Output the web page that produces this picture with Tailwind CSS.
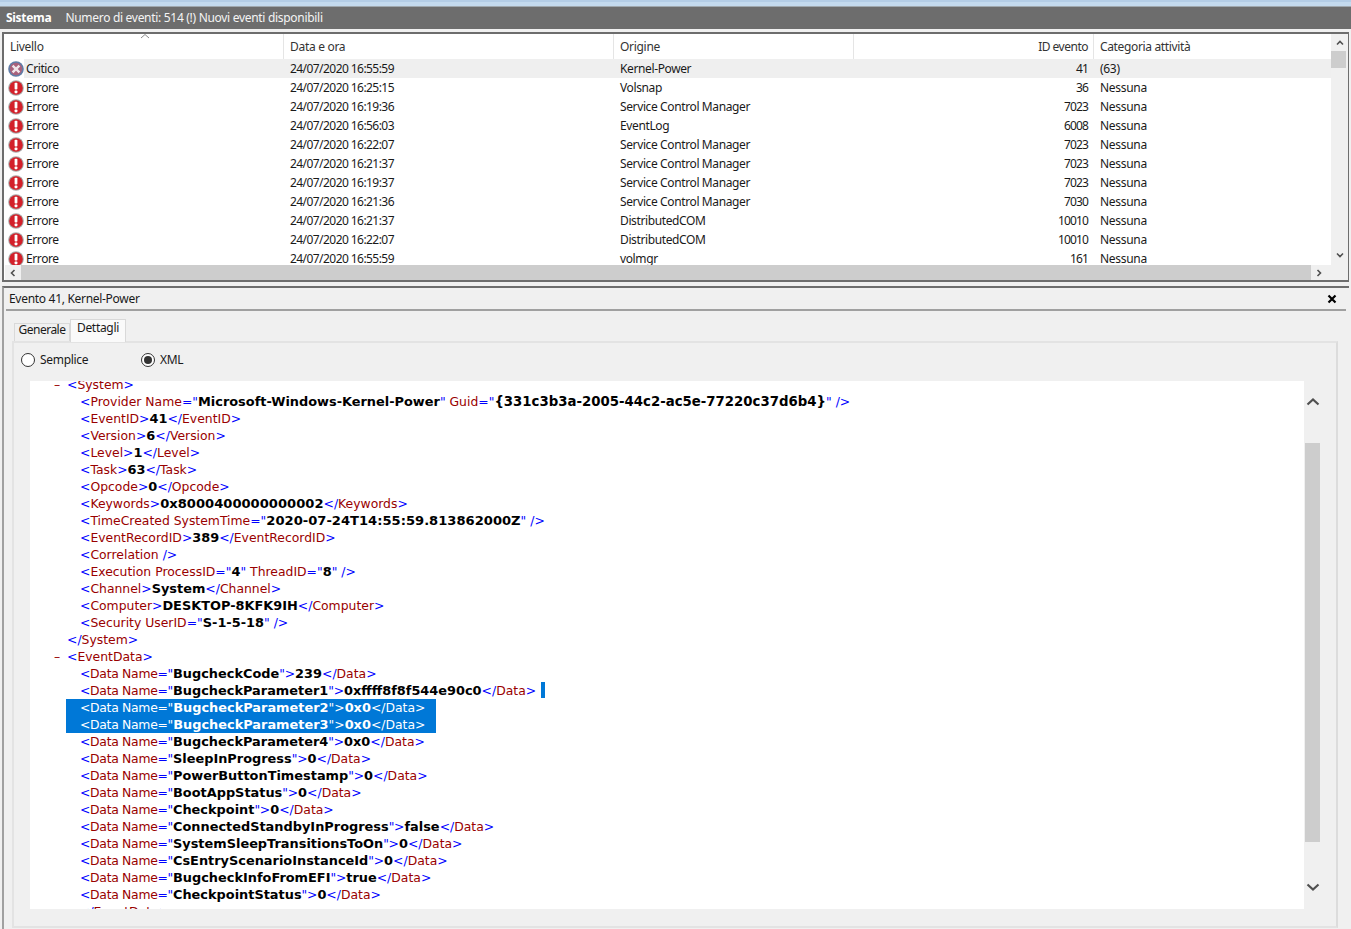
<!doctype html>
<html>
<head>
<meta charset="UTF-8">
<title>Visualizzatore eventi</title>
<script src="https://cdn.jsdelivr.net/npm/@tailwindcss/browser@4"></script>
</head>
<body>
<div class="w-[1351px] h-[929px] overflow-hidden bg-[#f0f0f0] font-['Noto_Sans',sans-serif] text-[12px] tracking-[-0.3px] text-[#1a1a1a]">
  <div class="h-[2px] bg-[#b4cde6]"></div>
  <div class="h-[4px] bg-[#c4daee]"></div>
  <div class="h-[1px] bg-[#a0a8ae]"></div>
  <!-- title bar -->
  <div class="h-[22px] bg-[#6d6d6d] text-white flex items-center px-[6px] gap-[14px]">
    <span class="font-bold">Sistema</span>
    <span class="text-[#f4f4f4]">Numero di eventi: 514 (!) Nuovi eventi disponibili</span>
  </div>
  <div class="h-[3px] bg-[#f0f0f0]"></div>

  <!-- event list -->
  <div class="relative mx-[2px] w-[1347px] h-[250px] border-2 border-[#6d6d6d] border-r-[1px] border-b-[2px] bg-white overflow-hidden">
    <div class="flex h-full">
      <div class="w-[1327px] flex flex-col ml-[1px]">
        <div class="h-[25px] flex text-[#333] shrink-0 relative">
          <div class="w-[279px] pl-[5px] pt-[4px] border-r border-[#e5e5e5]">Livello</div>
          <div class="w-[330px] pl-[6px] pt-[4px] border-r border-[#e5e5e5]">Data e ora</div>
          <div class="w-[240px] pl-[6px] pt-[4px] border-r border-[#e5e5e5]">Origine</div>
          <div class="w-[240px] pr-[5px] pt-[4px] text-right border-r border-[#e5e5e5] tracking-[-0.5px]">ID evento</div>
          <div class="pl-[6px] pt-[4px] tracking-[-0.35px]">Categoria attività</div>
          <svg class="absolute left-[135px] -top-[1px]" width="10" height="6" viewBox="0 0 10 6"><path d="M1 5 L5 1.5 L9 5" fill="none" stroke="#8a8a8a" stroke-width="1"/></svg>
        </div>
        <div id="rows" class="flex-1 overflow-hidden"></div>
        <div class="h-[15px] shrink-0 flex bg-[#f0f0f0]">
          <div class="w-[16px] flex items-center justify-center">
            <svg width="8" height="8" viewBox="0 0 8 8"><path d="M5.5 1 L2.5 4 L5.5 7" fill="none" stroke="#505050" stroke-width="1.6"/></svg>
          </div>
          <div class="w-[1290px] bg-[#cdcdcd]"></div>
          <div class="w-[16px] flex items-center justify-center">
            <svg width="8" height="8" viewBox="0 0 8 8"><path d="M2.5 1 L5.5 4 L2.5 7" fill="none" stroke="#505050" stroke-width="1.6"/></svg>
          </div>
        </div>
      </div>
      <div class="w-[17px] bg-[#f0f0f0] flex flex-col">
        <div class="h-[17px] flex items-center justify-center">
          <svg width="8" height="8" viewBox="0 0 8 8"><path d="M1 5.5 L4 2.5 L7 5.5" fill="none" stroke="#505050" stroke-width="1.6"/></svg>
        </div>
        <div class="h-[17px] w-[15px] bg-[#cdcdcd]"></div>
        <div class="flex-1"></div>
        <div class="h-[29px] flex items-start justify-center">
          <svg width="8" height="8" viewBox="0 0 8 8"><path d="M1 2.5 L4 5.5 L7 2.5" fill="none" stroke="#505050" stroke-width="1.6"/></svg>
        </div>
      </div>
    </div>
  </div>

  <div class="h-[4px]"></div>

  <!-- detail pane -->
  <div class="relative mx-[2px] h-[643px] border-t-2 border-l-2 border-[#6d6d6d] border-l-[#a0a0a0] pl-[1px]">
    <div class="h-[21px] mr-[4px] pl-[4px] pt-[1px] flex justify-between items-center text-[#1a1a1a]">
      <span>Evento 41, Kernel-Power</span>
      <svg class="mr-[8px]" width="10" height="10" viewBox="0 0 10 10"><path d="M1.5 1.5 L8.5 8.5 M8.5 1.5 L1.5 8.5" stroke="#000" stroke-width="2.2"/></svg>
    </div>
    <div class="h-[2px] mr-[3px] ml-[1px] bg-[#a0a0a0]"></div>

    <div class="h-[8px]"></div>
    <div class="flex items-end h-[22px] ml-[9px]">
      <div class="w-[56px] h-[18px] border border-b-0 border-[#d9d9d9] text-center leading-[12px] tracking-[-0.5px]">Generale</div>
      <div class="w-[56px] h-[23px] border border-b-0 border-[#d9d9d9] bg-[#fafafa] text-center leading-[13px] -mb-[1px] relative pt-[1px]">Dettagli</div>
    </div>
    <div class="ml-[7px] w-[1326px] h-[587px] border-2 border-[#e3e3e3] border-r-[#dcdcdc] pl-[16px] pt-[7px]">
      <div class="flex items-center h-[20px] -ml-[9px]">
        <span class="w-[14px] h-[14px] rounded-full border border-[#333] bg-white"></span>
        <span class="ml-[5px] w-[101px]">Semplice</span>
        <span class="w-[14px] h-[14px] rounded-full border border-[#333] bg-white flex items-center justify-center"><span class="w-[8px] h-[8px] rounded-full bg-[#333]"></span></span>
        <span class="ml-[5px]">XML</span>
      </div>
      <div class="flex mt-[11px]">
        <div id="xml" class="w-[1274px] h-[528px] bg-white overflow-hidden font-['DejaVu_Sans',sans-serif] text-[12.4px] leading-[17px] tracking-normal whitespace-pre"></div>
        <div class="w-[16px] ml-[1px] relative flex flex-col">
          <div class="h-[62px] flex items-start justify-center pt-[16px]">
            <svg width="14" height="10" viewBox="0 0 14 10"><path d="M1.5 7.5 L7 2.5 L12.5 7.5" fill="none" stroke="#505050" stroke-width="2.2"/></svg>
          </div>
          <div class="h-[399px] w-[15px] bg-[#cdcdcd]"></div>
          <div class="h-[67px] flex items-start justify-center pt-[40px]">
            <svg width="14" height="10" viewBox="0 0 14 10"><path d="M1.5 2.5 L7 7.5 L12.5 2.5" fill="none" stroke="#505050" stroke-width="2.2"/></svg>
          </div>
        </div>
      </div>
    </div>
  </div>
</div>

<script>
const errorIcon = `<svg width="16" height="16" viewBox="0 0 16 16" class="shrink-0"><circle cx="8" cy="8" r="7.8" fill="#a9a9a9"/><circle cx="8" cy="8" r="6.8" fill="#d3202a"/><rect x="6.6" y="2.8" width="2.8" height="6.8" rx="0.8" fill="#fff"/><rect x="6.6" y="10.6" width="2.8" height="2.6" rx="0.6" fill="#fff"/></svg>`
const critIcon = `<svg width="16" height="16" viewBox="0 0 16 16" class="shrink-0"><circle cx="8" cy="8" r="7.8" fill="#5f7ea8"/><circle cx="8" cy="8" r="6.2" fill="#a8627c"/><path d="M4.6 4.6 L11.4 11.4 M11.4 4.6 L4.6 11.4" stroke="#f0e6ea" stroke-width="2.4"/></svg>`

const events = [
  ["Critico", "24/07/2020 16:55:59", "Kernel-Power", "41", "(63)"],
  ["Errore", "24/07/2020 16:25:15", "Volsnap", "36", "Nessuna"],
  ["Errore", "24/07/2020 16:19:36", "Service Control Manager", "7023", "Nessuna"],
  ["Errore", "24/07/2020 16:56:03", "EventLog", "6008", "Nessuna"],
  ["Errore", "24/07/2020 16:22:07", "Service Control Manager", "7023", "Nessuna"],
  ["Errore", "24/07/2020 16:21:37", "Service Control Manager", "7023", "Nessuna"],
  ["Errore", "24/07/2020 16:19:37", "Service Control Manager", "7023", "Nessuna"],
  ["Errore", "24/07/2020 16:21:36", "Service Control Manager", "7030", "Nessuna"],
  ["Errore", "24/07/2020 16:21:37", "DistributedCOM", "10010", "Nessuna"],
  ["Errore", "24/07/2020 16:22:07", "DistributedCOM", "10010", "Nessuna"],
  ["Errore", "24/07/2020 16:55:59", "volmgr", "161", "Nessuna"]
]

document.querySelector("#rows").innerHTML = events.map((e, i) => `
  <div class="h-[19px] flex items-center leading-[19px] ${i == 0 ? "bg-[linear-gradient(to_right,#fff_19px,#efefef_19px)]" : ""}">
    <div class="w-[278px] pl-[3px] flex items-center gap-[2px] tracking-[-0.4px]">${i == 0 ? critIcon : errorIcon}<span>${e[0]}</span></div>
    <div class="w-[330px] pl-[7px] tracking-[-0.56px]">${e[1]}</div>
    <div class="w-[240px] pl-[7px] tracking-[-0.38px]">${e[2]}</div>
    <div class="w-[240px] pr-[5px] text-right tracking-[-0.85px]">${e[3]}</div>
    <div class="pl-[7px]">${e[4]}</div>
  </div>`).join("")

const xml = [
  [1, '<System>'],
  [2, '<Provider Name="Microsoft-Windows-Kernel-Power" Guid="{331c3b3a-2005-44c2-ac5e-77220c37d6b4}" />'],
  [2, '<EventID>41</EventID>'],
  [2, '<Version>6</Version>'],
  [2, '<Level>1</Level>'],
  [2, '<Task>63</Task>'],
  [2, '<Opcode>0</Opcode>'],
  [2, '<Keywords>0x8000400000000002</Keywords>'],
  [2, '<TimeCreated SystemTime="2020-07-24T14:55:59.813862000Z" />'],
  [2, '<EventRecordID>389</EventRecordID>'],
  [2, '<Correlation />'],
  [2, '<Execution ProcessID="4" ThreadID="8" />'],
  [2, '<Channel>System</Channel>'],
  [2, '<Computer>DESKTOP-8KFK9IH</Computer>'],
  [2, '<Security UserID="S-1-5-18" />'],
  [0, '</System>'],
  [1, '<EventData>'],
  [2, '<Data Name="BugcheckCode">239</Data>'],
  [3, '<Data Name="BugcheckParameter1">0xffff8f8f544e90c0</Data>'],
  [4, '<Data Name="BugcheckParameter2">0x0</Data>'],
  [4, '<Data Name="BugcheckParameter3">0x0</Data>'],
  [2, '<Data Name="BugcheckParameter4">0x0</Data>'],
  [2, '<Data Name="SleepInProgress">0</Data>'],
  [2, '<Data Name="PowerButtonTimestamp">0</Data>'],
  [2, '<Data Name="BootAppStatus">0</Data>'],
  [2, '<Data Name="Checkpoint">0</Data>'],
  [2, '<Data Name="ConnectedStandbyInProgress">false</Data>'],
  [2, '<Data Name="SystemSleepTransitionsToOn">0</Data>'],
  [2, '<Data Name="CsEntryScenarioInstanceId">0</Data>'],
  [2, '<Data Name="BugcheckInfoFromEFI">true</Data>'],
  [2, '<Data Name="CheckpointStatus">0</Data>'],
  [0, '</EventData>']
]

function esc(s) { return s.replace(/&/g, "&amp;").replace(/</g, "&lt;").replace(/>/g, "&gt;") }

// verdana's bold digits run wider than dejavu's
function boldSize(v) {
  if (v[0] == "{") return "text-[13.3px]"
  if (/\d{4}/.test(v)) return "text-[13.1px]"
  return "text-[12.9px]"
}

// colours one xml line: brackets blue, names red, values bold black
function colour(line, selected) {
  if (selected) {
    return line.replace(/("[^"]*"|>[^<]+<|[^">]+|.)/g, m => {
      if (m[0] == '"') return `"<b class="text-[12.9px]">${esc(m.slice(1, -1))}</b>"`
      if (m[0] == ">" && m.length > 2) return `&gt;<b class="text-[12.9px]">${esc(m.slice(1, -1))}</b>&lt;`
      if (m.startsWith("<Data")) return `<span class="tracking-[-0.3px]">${esc(m)}</span>`
      return esc(m)
    })
  }
  let tight = line.startsWith("<Data Name") ? "tracking-[-0.3px]" : ""
  const blue = s => `<span class="text-[#0000ff] ${tight}">${esc(s)}</span>`
  const red = s => `<span class="text-[#990000] ${tight}">${esc(s)}</span>`
  const bold = s => `<b class="text-black ${boldSize(s)}">${esc(s)}</b>`
  let out = ""
  for (const m of line.matchAll(/<\/|\/>|<|>|=|"[^"]*"|[^<>="\/]+/g)) {
    const t = m[0]
    if (t[0] == '"') {
      out += blue('"') + bold(t.slice(1, -1)) + blue('"')
      tight = ""
    }
    else if (["<", "</", "/>", ">", "="].includes(t)) out += blue(t)
    else if (m.index > 0 && line[m.index - 1] == ">") out += bold(t)
    else out += red(t)
  }
  return out
}

document.querySelector("#xml").innerHTML = xml.map(([kind, line], i) => {
  const top = i == 0 ? "-mt-[5px]" : ""
  if (kind == 4) return `<div class="ml-[36px] pl-[14px] w-[370px] h-[17px] bg-[#0078d7] text-white">${colour(line, true)}</div>`
  const minus = kind == 1 ? `<span class="absolute left-[24px] text-[#990000]">–</span>` : ""
  const pad = kind == 1 ? "pl-[37px]" : kind == 0 ? (i == 15 ? "pl-[37px]" : "pl-[49px]") : "pl-[50px]"
  const caret = kind == 3 ? `<span class="inline-block ml-[5px] w-[4px] h-[16px] bg-[#0078d7] align-top"></span>` : ""
  return `<div class="${top} ${pad} h-[17px] relative">${minus}${colour(line, false)}${caret}</div>`
}).join("")
</script>
</body>
</html>
